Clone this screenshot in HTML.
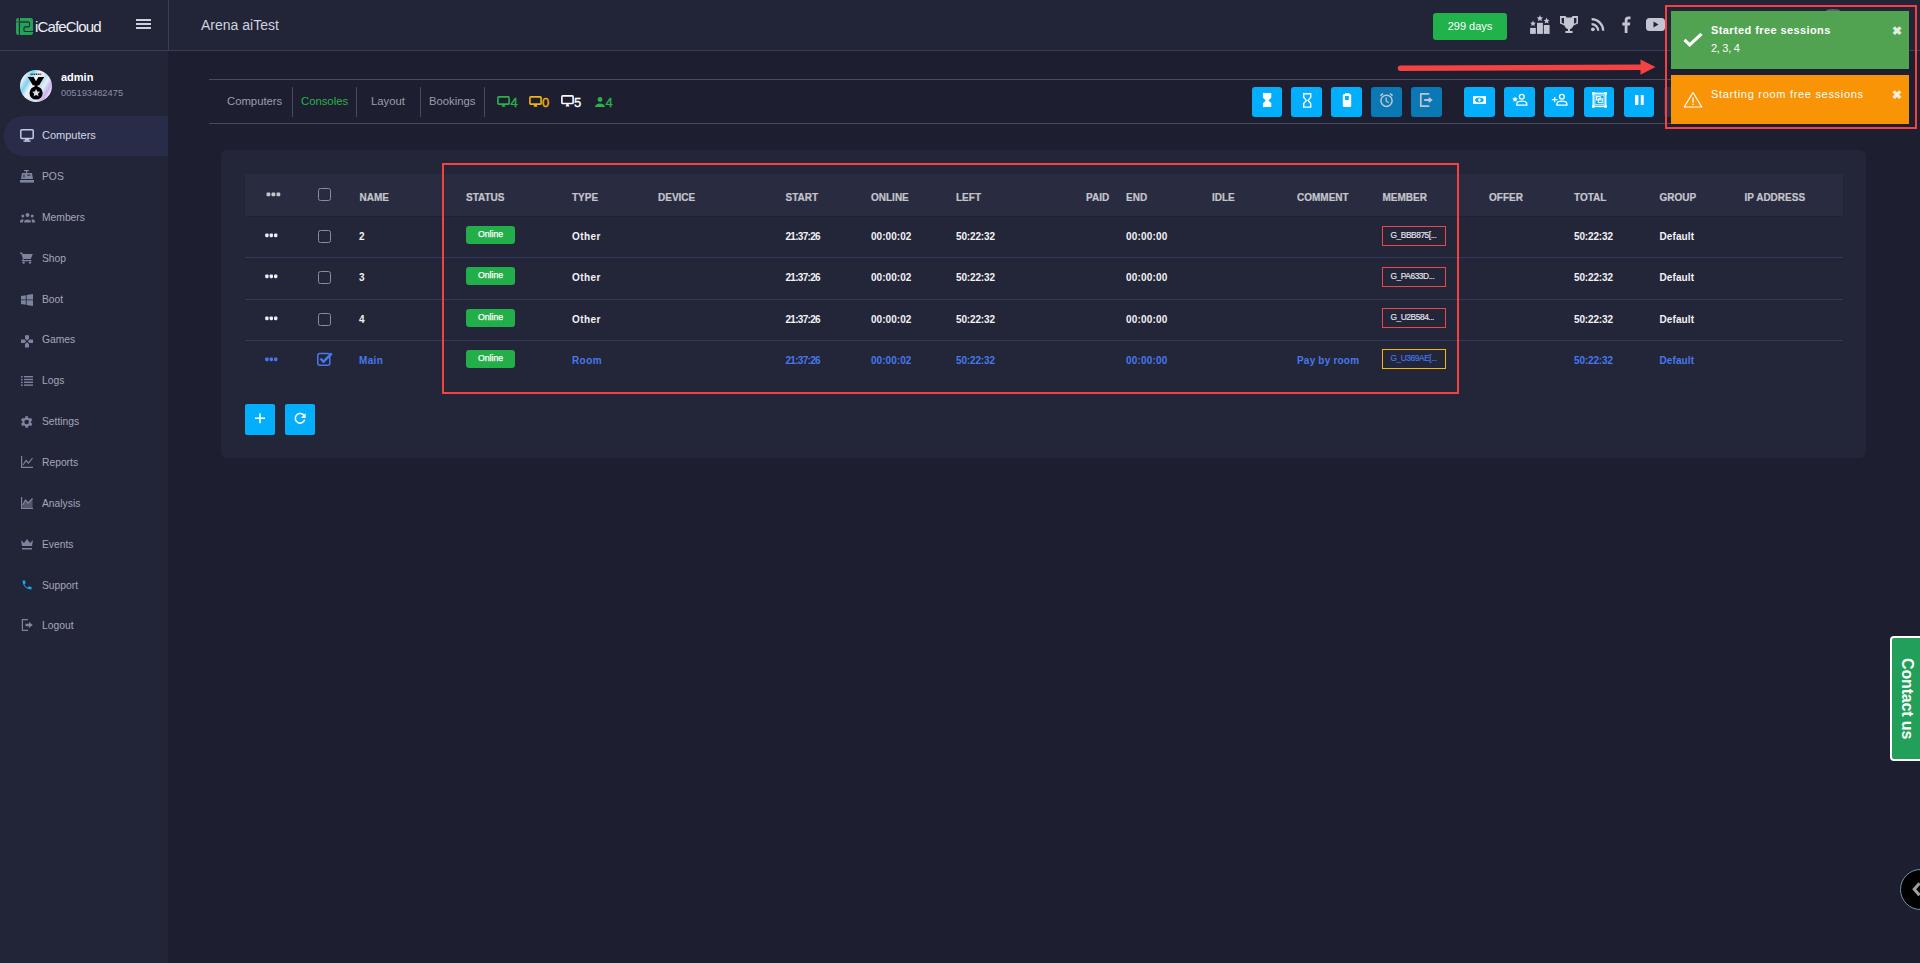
<!DOCTYPE html>
<html><head><meta charset="utf-8"><style>
*{margin:0;padding:0;box-sizing:border-box}
html,body{width:1920px;height:963px;overflow:hidden;background:#1d1e2f;font-family:"Liberation Sans",sans-serif}
.a{position:absolute}
#side{left:0;top:0;width:168px;height:963px;background:#222438}
#hdr{left:0;top:0;width:1920px;height:51px;background:#222438;border-bottom:1px solid #393b57}
#vline{left:168px;top:0;width:1px;height:50px;background:#393b57}
.t{white-space:nowrap;line-height:1}
.mi{left:42px;font-size:10.3px;color:#a3a7ba}
.ic{left:20px;width:14px;height:14px}
.ln{background:#4a4b5f;height:1px}
.dv{background:#4a4b5f;width:1px;top:87px;height:30px}
.tab{font-size:11.3px;color:#9b9dad;top:95.5px}
.btn{top:87px;width:30px;height:30px;border-radius:3px;background:#03aefc}
.btn.dis{background:#0a78b4}
.btn svg{position:absolute;left:0;top:0}
.hd{font-size:10px;font-weight:bold;color:#c4c5cc;top:193px;-webkit-text-stroke:0.2px currentColor}
.cell{font-size:10px;font-weight:bold;color:#f2f2f6;letter-spacing:-0.45px}
.blue{color:#4679ec}
.badge{width:49px;height:18px;background:#22ae48;border-radius:3px;color:#fff;font-size:8.7px;text-align:center;line-height:17px;-webkit-text-stroke:0.25px #fff}
.mem{left:1382px;width:64px;height:20px;border:1.5px solid #e84848;color:#f0f0f4;font-size:8.4px;line-height:16px;padding-left:7.5px;letter-spacing:-0.45px;-webkit-text-stroke:0.15px currentColor}
.sep{left:245px;width:1598px;height:1px;background:#35385a}
.cnt{font-size:13px;top:95.5px;-webkit-text-stroke:0.35px currentColor}
.cb{left:318px;width:13px;height:13px;border:1.3px solid #8a8c99;border-radius:2.5px}
</style></head><body>
<div id="side" class="a"></div>
<div id="hdr" class="a"></div>
<div id="vline" class="a"></div>

<!-- logo -->
<svg class="a" style="left:16px;top:18px" width="17" height="17" viewBox="0 0 17 17">
<rect x="0" y="0" width="17" height="17" rx="2.2" fill="#21a453"/>
<rect x="2.85" y="0" width="1.15" height="17" fill="#23263a"/>
<path d="M0 4H12.6" stroke="#2f5a48" stroke-width="1.1"/>
<path d="M4 4H12.4a1.1 1.1 0 0 1 1.1 1.1V7.7a1.1 1.1 0 0 1-1.1 1.1H9.1a1.1 1.1 0 0 0-1.1 1.1V12.4a1.1 1.1 0 0 0 1.1 1.1H17" fill="none" stroke="#23263a" stroke-width="1.15"/>
</svg>
<div class="a t" style="left:35px;top:19px;font-size:15px;color:#eef0f5;letter-spacing:-0.85px">iCafeCloud</div>
<!-- hamburger -->
<div class="a" style="left:136px;top:19px;width:15px;height:2px;background:#cfd2de"></div>
<div class="a" style="left:136px;top:23px;width:15px;height:2px;background:#cfd2de"></div>
<div class="a" style="left:136px;top:27px;width:15px;height:2px;background:#cfd2de"></div>

<!-- avatar -->
<div class="a" style="left:20px;top:70px;width:32px;height:32px;border-radius:50%;background:linear-gradient(120deg,#b8e8f4 0%,#e8f0f6 15%,#7ed4ee 28%,#eef2f8 40%,#f2e6f0 50%,#b8e4f0 58%,#e8eef6 66%,#c8b0ec 78%,#eef4f8 88%,#7cd8f0 100%)"></div>
<svg class="a" style="left:20px;top:70px" width="32" height="32" viewBox="0 0 32 32">
<path d="M7.8 7h5.8L16 11.2 18.4 7h5.8l-5 8.2h-6.4z" fill="#000"/>
<rect x="14.6" y="14.5" width="3" height="3.5" fill="#000"/>
<circle cx="16.1" cy="23" r="6.6" fill="#000"/>
<path d="M16.1 18.9l1.2 2.5 2.7.35-2 1.9.5 2.7-2.4-1.3-2.4 1.3.5-2.7-2-1.9 2.7-.35z" fill="#dcdce4"/>
<path d="M10.5 4.2h11" stroke="#333" stroke-width="1.4" stroke-dasharray="1.2 0.6"/>
</svg>
<div class="a t" style="left:61px;top:72px;font-size:11px;font-weight:bold;color:#fff">admin</div>
<div class="a t" style="left:61px;top:89px;font-size:9.3px;color:#8b8fa3">005193482475</div>

<!-- active menu -->
<div class="a" style="left:4px;top:116px;width:164px;height:40px;background:#282c48;border-radius:20px 0 0 20px"></div>

<!-- menu icons -->
<svg class="a" style="left:20px;top:129px" width="14" height="13" viewBox="0 0 14 13"><rect x="0.8" y="0.8" width="12.4" height="8.6" rx="1" fill="none" stroke="#c6cbe0" stroke-width="1.5"/><rect x="5" y="10" width="4" height="1.6" fill="#c6cbe0"/><rect x="3.5" y="11.4" width="7" height="1.4" fill="#c6cbe0"/></svg>
<div class="a t mi" style="top:130px;color:#d3d6e6;font-size:11px">Computers</div>

<svg class="a" style="left:20px;top:170px" width="14" height="13" viewBox="0 0 14 13"><rect x="4" y="0" width="5" height="1.2" fill="#7d849d"/><rect x="6" y="1" width="1.2" height="2" fill="#7d849d"/><path d="M2 3h10l1 6H1z" fill="#7d849d"/><rect x="0" y="10" width="14" height="2.6" fill="#7d849d"/><rect x="3.5" y="4.5" width="1" height="3" fill="#222438"/><rect x="7" y="4.6" width="3.5" height="1" fill="#222438"/></svg>
<div class="a t mi" style="top:172px">POS</div>

<svg class="a" style="left:20px;top:213px" width="15" height="10" viewBox="0 0 15 10"><circle cx="7.5" cy="2" r="2" fill="#7d849d"/><circle cx="2.8" cy="3" r="1.5" fill="#7d849d"/><circle cx="12.2" cy="3" r="1.5" fill="#7d849d"/><path d="M4 9.5a3.5 3 0 0 1 7 0z" fill="#7d849d"/><path d="M0 9.5a2.5 2.8 0 0 1 3.5-3l-.5 3z M15 9.5a2.5 2.8 0 0 0-3.5-3l.5 3z" fill="#7d849d"/></svg>
<div class="a t mi" style="top:213px">Members</div>

<svg class="a" style="left:20px;top:252px" width="13" height="12" viewBox="0 0 13 12"><path d="M0 0.5h2.2l.6 1.5h10l-2 5H3.8l-.4 1h8v1.3H1.5l1.4-2.6L1.3 1.8H0z" fill="#7d849d"/><circle cx="3.6" cy="10.6" r="1.2" fill="#7d849d"/><circle cx="10" cy="10.6" r="1.2" fill="#7d849d"/></svg>
<div class="a t mi" style="top:254px">Shop</div>

<svg class="a" style="left:21px;top:294px" width="12" height="12" viewBox="0 0 12 12"><path d="M0 2l4.8-.8v4.3H0z M5.6 1.1L12 0v5.5H5.6z M0 6.3h4.8v4.4L0 10z M5.6 6.3H12V12l-6.4-1z" fill="#7d849d"/></svg>
<div class="a t mi" style="top:295px">Boot</div>

<svg class="a" style="left:21px;top:334.5px" width="12" height="13" viewBox="0 0 12 13"><g fill="#7d849d"><path d="M4 0.3H8V3.8L6 5.4L4 3.8Z"/><path d="M4 12.4H8V8.9L6 7.3L4 8.9Z"/><path d="M0 4.5V8H3.6L5.2 6.25L3.6 4.5Z"/><path d="M12 4.5V8H8.4L6.8 6.25L8.4 4.5Z"/></g></svg>
<div class="a t mi" style="top:335px">Games</div>

<svg class="a" style="left:21px;top:376px" width="12" height="10" viewBox="0 0 12 10"><g fill="#7d849d"><rect x="0" y="0" width="1.6" height="1.6"/><rect x="3" y="0" width="9" height="1.4"/><rect x="0" y="2.8" width="1.6" height="1.6"/><rect x="3" y="2.8" width="9" height="1.4"/><rect x="0" y="5.6" width="1.6" height="1.6"/><rect x="3" y="5.6" width="9" height="1.4"/><rect x="0" y="8.4" width="1.6" height="1.6"/><rect x="3" y="8.4" width="9" height="1.4"/></g></svg>
<div class="a t mi" style="top:376px">Logs</div>

<svg class="a" style="left:18.3px;top:413.7px" width="16" height="16" viewBox="0 0 24 24"><path fill="#7d849d" d="M19.4 13a7.7 7.7 0 0 0 0-2l2.1-1.6-2-3.5-2.5 1a7.3 7.3 0 0 0-1.7-1L15 3.2h-4l-.4 2.7a7.3 7.3 0 0 0-1.7 1l-2.5-1-2 3.5L6.6 11a7.7 7.7 0 0 0 0 2l-2.1 1.6 2 3.5 2.5-1a7.3 7.3 0 0 0 1.7 1l.4 2.7h4l.4-2.7a7.3 7.3 0 0 0 1.7-1l2.5 1 2-3.5zM13 15.5a3.5 3.5 0 1 1 0-7 3.5 3.5 0 0 1 0 7z"/></svg>
<div class="a t mi" style="top:417px">Settings</div>

<svg class="a" style="left:21px;top:456px" width="12" height="12" viewBox="0 0 12 12"><path d="M0.6 0v11.4H12" fill="none" stroke="#7d849d" stroke-width="1.2"/><path d="M2 9l3-4.5 2.5 2.5L11.5 2" fill="none" stroke="#7d849d" stroke-width="1.2"/></svg>
<div class="a t mi" style="top:458px">Reports</div>

<svg class="a" style="left:21px;top:497px" width="12" height="12" viewBox="0 0 12 12"><path d="M0.6 0v11.4H12" fill="none" stroke="#7d849d" stroke-width="1.2"/><path d="M1.5 10.8V8l3-5 2.5 3 4.5-4.5v9.3z" fill="#7d849d" opacity=".55"/><path d="M1.5 8l3-5 2.5 3 4.5-4.5" fill="none" stroke="#7d849d" stroke-width="1.2"/></svg>
<div class="a t mi" style="top:499px">Analysis</div>

<svg class="a" style="left:21px;top:539px" width="12" height="11" viewBox="0 0 12 11"><path d="M0 1l3 3 3-4 3 4 3-3-1 6H1z" fill="#7d849d"/><rect x="1" y="9" width="10" height="1.5" fill="#7d849d"/></svg>
<div class="a t mi" style="top:540px">Events</div>

<svg class="a" style="left:21px;top:579px" width="12" height="12" viewBox="0 0 24 24"><path fill="#17a8f0" d="M6.6 10.8a15 15 0 0 0 6.6 6.6l2.2-2.2a1 1 0 0 1 1-.25 11.4 11.4 0 0 0 3.6.57 1 1 0 0 1 1 1V20a1 1 0 0 1-1 1A17 17 0 0 1 3 4a1 1 0 0 1 1-1h3.5a1 1 0 0 1 1 1c0 1.25.2 2.45.57 3.57a1 1 0 0 1-.25 1z"/></svg>
<div class="a t mi" style="top:581px">Support</div>

<svg class="a" style="left:21px;top:619px" width="12" height="12" viewBox="0 0 12 12"><path d="M7 0.6H1.4v10.8H7" fill="none" stroke="#7d849d" stroke-width="1.2"/><path d="M4.5 4.8H8V3l3.8 3L8 9V7.2H4.5z" fill="#7d849d"/></svg>
<div class="a t mi" style="top:621px">Logout</div>

<!-- header content -->
<div class="a t" style="left:201px;top:18px;font-size:14px;color:#d0d2de">Arena aiTest</div>
<div class="a" style="left:1433px;top:13px;width:74px;height:27px;background:#21b24b;border-radius:3px;color:#fff;font-size:11px;line-height:27px;text-align:center">299 days</div>


<!-- header icons -->
<svg class="a" style="left:1529px;top:15px" width="22" height="20" viewBox="0 0 22 20"><g fill="#c3c6d2"><rect x="1.1" y="12.9" width="5.7" height="6"/><rect x="8" y="7.8" width="5.9" height="11.1"/><rect x="14.8" y="10" width="5.8" height="8.9"/><path d="M4.00,5.50 L4.82,7.47 L6.95,7.64 L5.33,9.03 L5.82,11.11 L4.00,9.99 L2.18,11.11 L2.67,9.03 L1.05,7.64 L3.18,7.47Z"/><path d="M10.90,0.10 L11.80,2.26 L14.13,2.45 L12.36,3.97 L12.90,6.25 L10.90,5.03 L8.90,6.25 L9.44,3.97 L7.67,2.45 L10.00,2.26Z"/><path d="M17.60,2.60 L18.47,4.70 L20.74,4.88 L19.01,6.36 L19.54,8.57 L17.60,7.38 L15.66,8.57 L16.19,6.36 L14.46,4.88 L16.73,4.70Z"/></g></svg>
<svg class="a" style="left:1559px;top:15px" width="20" height="19" viewBox="0 0 20 19"><path fill-rule="evenodd" fill="#c3c6d2" d="M1 1H6.5L7.5 2.6H12.5L13.5 1H19V8.6L14.6 10.6C13.6 13 12.2 14 11 14.3V16H13.6V18H6.4V16H9V14.3C7.8 14 6.4 13 5.4 10.6L1 8.6Z M2.6 3V7.7L5 8.7V3Z M17.4 3V7.7L15 8.7V3Z"/></svg>
<svg class="a" style="left:1590px;top:17px" width="16" height="16" viewBox="0 0 16 16"><g fill="none" stroke="#c3c6d2" stroke-width="2.2"><path d="M1.6 7.2A6.6 6.6 0 0 1 8.2 13.8"/><path d="M1.6 2.2A11.6 11.6 0 0 1 13.2 13.8"/></g><circle cx="2.9" cy="12.3" r="1.9" fill="#c3c6d2"/></svg>
<svg class="a" style="left:1621px;top:16px" width="10" height="17" viewBox="0 0 10 17"><path d="M6.5 17V9.5h2.4l.4-3H6.5V4.7c0-.85.3-1.45 1.5-1.45H9.5V.5A19 19 0 0 0 7.3.4C5.2.4 3.7 1.7 3.7 4.1v2.4H1.3v3h2.4V17z" fill="#c3c6d2"/></svg>
<svg class="a" style="left:1646px;top:18px" width="19" height="13" viewBox="0 0 19 13"><rect x="0" y="0" width="19" height="13" rx="3.5" fill="#c3c6d2"/><path d="M7.5 3.5v6l5-3z" fill="#222438"/></svg>

<!-- tabs -->
<div class="a ln" style="left:209px;top:79px;width:1660px"></div>
<div class="a ln" style="left:209px;top:123px;width:1660px"></div>
<div class="a t tab" style="left:227px">Computers</div>
<div class="a dv" style="left:292px"></div>
<div class="a t tab" style="left:301px;color:#2bb24c">Consoles</div>
<div class="a dv" style="left:356px"></div>
<div class="a t tab" style="left:371px">Layout</div>
<div class="a dv" style="left:420px"></div>
<div class="a t tab" style="left:429px">Bookings</div>
<div class="a dv" style="left:484px"></div>
<!-- counters -->
<svg class="a" style="left:497px;top:96px" width="13" height="11" viewBox="0 0 13 11"><rect x="0.9" y="0.9" width="11.2" height="7.2" rx="0.8" fill="none" stroke="#2bb24c" stroke-width="1.6"/><path d="M4.5 10.8l1.2-2.6h1.6l1.2 2.6z" fill="#2bb24c"/></svg>
<div class="a t cnt" style="left:510.5px;color:#2bb24c">4</div>
<svg class="a" style="left:529px;top:96px" width="13" height="11" viewBox="0 0 13 11"><rect x="0.9" y="0.9" width="11.2" height="7.2" rx="0.8" fill="none" stroke="#f5b50c" stroke-width="1.6"/><path d="M4.5 10.8l1.2-2.6h1.6l1.2 2.6z" fill="#f5b50c"/></svg>
<div class="a t cnt" style="left:542px;color:#f5b50c">0</div>
<svg class="a" style="left:561px;top:95px" width="13" height="12" viewBox="0 0 13 12"><rect x="0.9" y="0.9" width="11.2" height="7.6" rx="0.8" fill="none" stroke="#ffffff" stroke-width="1.6"/><path d="M4.5 11.5l1.2-2.6h1.6l1.2 2.6z" fill="#ffffff"/></svg>
<div class="a t cnt" style="left:574px;color:#fff">5</div>
<svg class="a" style="left:595px;top:97px" width="10" height="10" viewBox="0 0 10 10"><circle cx="5" cy="2.5" r="2.4" fill="#2bb24c"/><path d="M0 10a5 3.6 0 0 1 10 0z" fill="#2bb24c"/></svg>
<div class="a t cnt" style="left:605.5px;color:#2bb24c">4</div>

<!-- toolbar buttons -->
<div class="a btn" style="left:1252px"><svg width="30" height="30" viewBox="0 0 30 30"><path d="M10.9 6.1h8.4v4.4l-2.8 2.9 2.8 2.9v3.6h-8.4v-3.6l2.8-2.9-2.8-2.9z" fill="#fff"/></svg></div>
<div class="a btn" style="left:1291px;width:31px"><svg width="31" height="30" viewBox="0 0 31 30"><path d="M12.7 6.8h7v3.4l-2.6 3.2 2.6 3.2v3.5h-7v-3.5l2.6-3.2-2.6-3.2z" fill="none" stroke="#fff" stroke-width="1.4"/></svg></div>
<div class="a btn" style="left:1331px;width:31px"><svg width="31" height="30" viewBox="0 0 31 30"><rect x="14" y="6.1" width="4.4" height="2" fill="#fff"/><rect x="11.8" y="7.3" width="8.4" height="12.6" rx="0.8" fill="#fff"/><rect x="13.9" y="9" width="3.9" height="4" fill="#03aefc"/></svg></div>
<div class="a btn dis" style="left:1371px;width:31px"><svg width="31" height="30" viewBox="0 0 31 30"><circle cx="15.5" cy="13.8" r="5.6" fill="none" stroke="#c2c6cb" stroke-width="1.5"/><path d="M15.2 10.4v3.6l2.6 1.7" fill="none" stroke="#c2c6cb" stroke-width="1.3"/><path d="M9.4 8.6l2.6-2.1M21.6 8.6l-2.6-2.1" stroke="#c2c6cb" stroke-width="1.6"/></svg></div>
<div class="a btn dis" style="left:1411px;width:31px"><svg width="31" height="30" viewBox="0 0 31 30"><path d="M17.6 7.4v-0.6h-7.8v12.4h7.8v-0.6" fill="none" stroke="#c2c6cb" stroke-width="1.7" stroke-linejoin="round"/><path d="M13.2 12h4.5V9.9L21.8 13l-4.1 3.1v-2.1h-4.5z" fill="#c2c6cb"/></svg></div>
<div class="a btn" style="left:1464px;width:31px"><svg width="31" height="30" viewBox="0 0 31 30"><rect x="9" y="9.1" width="13" height="7.8" fill="#fff"/><ellipse cx="15.4" cy="13" rx="4.3" ry="2.5" fill="#03aefc"/><ellipse cx="15.4" cy="13" rx="1.3" ry="1.7" fill="#fff"/></svg></div>
<div class="a btn" style="left:1504px;width:31px"><svg width="31" height="30" viewBox="0 0 31 30"><circle cx="17.8" cy="9.7" r="2.4" fill="none" stroke="#fff" stroke-width="1.3"/><path d="M12.8 18.1v-1.2c0-1.8 2.4-2.7 5-2.7s5 .9 5 2.7v1.2z" fill="none" stroke="#fff" stroke-width="1.3"/><path d="M11 9.6l.85 1.75 1.9.25-1.4 1.3.35 1.9-1.7-.9-1.7.9.35-1.9-1.4-1.3 1.9-.25z" fill="#fff"/></svg></div>
<div class="a btn" style="left:1544px"><svg width="30" height="30" viewBox="0 0 30 30"><circle cx="17.9" cy="9.7" r="2.4" fill="none" stroke="#fff" stroke-width="1.3"/><path d="M12.9 18.1v-1.2c0-1.8 2.4-2.7 5-2.7s5 .9 5 2.7v1.2z" fill="none" stroke="#fff" stroke-width="1.3"/><path d="M7.8 12.6h5.7M10.65 9.9v5.4" stroke="#fff" stroke-width="1.3"/></svg></div>
<div class="a btn" style="left:1584px"><svg width="30" height="30" viewBox="0 0 30 30"><rect x="9.2" y="6.3" width="12.6" height="13.2" fill="none" stroke="#fff" stroke-width="1.3"/><g fill="#fff"><rect x="8.1" y="5.1" width="2.6" height="2.6"/><rect x="20.3" y="5.1" width="2.6" height="2.6"/><rect x="8.1" y="18.1" width="2.6" height="2.6"/><rect x="20.3" y="18.1" width="2.6" height="2.6"/></g><rect x="10.9" y="8" width="9.2" height="9.8" fill="none" stroke="#fff" stroke-width="0.9"/><rect x="12.6" y="9.6" width="3.6" height="3.4" fill="none" stroke="#fff" stroke-width="1.1"/><rect x="14.4" y="11.8" width="3.8" height="3.8" fill="none" stroke="#fff" stroke-width="1.1"/></svg></div>
<div class="a btn" style="left:1624px"><svg width="30" height="30" viewBox="0 0 30 30"><rect x="11" y="8" width="3.4" height="10" fill="#fff"/><rect x="16.8" y="8" width="2.9" height="10" fill="#fff"/></svg></div>
<div class="a" style="left:1664px;top:87px;width:30px;height:30px;background:#2b2e49;border-radius:3px"></div>

<!-- card -->
<div class="a" style="left:221px;top:150px;width:1645px;height:308px;background:#232538;border-radius:6px"></div>
<div class="a" style="left:245px;top:174px;width:1598px;height:42px;background:#292b40"></div>
<div class="a" style="left:245px;top:216px;width:1598px;height:1px;background:#1f2033"></div>
<div class="a sep" style="top:257px"></div>
<div class="a sep" style="top:299px"></div>
<div class="a sep" style="top:340px"></div>
<!-- header row -->
<svg class="a" style="left:266px;top:192px" width="15" height="5" viewBox="0 0 15 5"><g fill="#c3c4cc"><rect x="0.5" y="0.5" width="3.8" height="3.8" rx="1"/><rect x="5.5" y="0.5" width="3.8" height="3.8" rx="1"/><rect x="10.5" y="0.5" width="3.8" height="3.8" rx="1"/></g></svg>
<div class="a cb" style="top:188px"></div>

<div class="a t hd" style="left:359.5px">NAME</div>
<div class="a t hd" style="left:466px">STATUS</div>
<div class="a t hd" style="left:572px">TYPE</div>
<div class="a t hd" style="left:658px">DEVICE</div>
<div class="a t hd" style="left:785.5px">START</div>
<div class="a t hd" style="left:871px">ONLINE</div>
<div class="a t hd" style="left:956px">LEFT</div>
<div class="a t hd" style="left:1086px">PAID</div>
<div class="a t hd" style="left:1126px">END</div>
<div class="a t hd" style="left:1212px">IDLE</div>
<div class="a t hd" style="left:1297px">COMMENT</div>
<div class="a t hd" style="left:1382.5px">MEMBER</div>
<div class="a t hd" style="left:1489px">OFFER</div>
<div class="a t hd" style="left:1574px">TOTAL</div>
<div class="a t hd" style="left:1659.5px">GROUP</div>
<div class="a t hd" style="left:1744.5px">IP ADDRESS</div>
<svg class="a" style="left:265px;top:233.0px" width="14" height="5" viewBox="0 0 14 5"><g fill="#eef0f8"><rect x="0.2" y="0.4" width="3.4" height="3.8" rx="1.1"/><rect x="4.6" y="0.4" width="3.4" height="3.8" rx="1.1"/><rect x="9" y="0.4" width="3.4" height="3.8" rx="1.1"/></g></svg>
<div class="a cb" style="top:230.0px"></div>
<div class="a t cell" style="left:359px;top:232.0px;letter-spacing:0">2</div>
<div class="a badge" style="left:466px;top:226.0px">Online</div>
<div class="a t cell" style="left:572px;top:232.0px;letter-spacing:0.4px">Other</div>
<div class="a t cell" style="left:785.5px;top:232.0px;letter-spacing:-0.7px">21:37:26</div>
<div class="a t cell" style="left:871px;top:232.0px;letter-spacing:0.05px">00:00:02</div>
<div class="a t cell" style="left:956px;top:232.0px;letter-spacing:-0.15px">50:22:32</div>
<div class="a t cell" style="left:1126px;top:232.0px;letter-spacing:0.2px">00:00:00</div>
<div class="a t cell" style="left:1574px;top:232.0px;letter-spacing:-0.15px">50:22:32</div>
<div class="a t cell" style="left:1659.5px;top:232.0px;letter-spacing:0.1px">Default</div>
<div class="a mem" style="top:225.5px;border-color:#e84848;color:#e8e8ee">G_BBB875[...</div>
<svg class="a" style="left:265px;top:274.0px" width="14" height="5" viewBox="0 0 14 5"><g fill="#eef0f8"><rect x="0.2" y="0.4" width="3.4" height="3.8" rx="1.1"/><rect x="4.6" y="0.4" width="3.4" height="3.8" rx="1.1"/><rect x="9" y="0.4" width="3.4" height="3.8" rx="1.1"/></g></svg>
<div class="a cb" style="top:271.0px"></div>
<div class="a t cell" style="left:359px;top:273.0px;letter-spacing:0">3</div>
<div class="a badge" style="left:466px;top:267.0px">Online</div>
<div class="a t cell" style="left:572px;top:273.0px;letter-spacing:0.4px">Other</div>
<div class="a t cell" style="left:785.5px;top:273.0px;letter-spacing:-0.7px">21:37:26</div>
<div class="a t cell" style="left:871px;top:273.0px;letter-spacing:0.05px">00:00:02</div>
<div class="a t cell" style="left:956px;top:273.0px;letter-spacing:-0.15px">50:22:32</div>
<div class="a t cell" style="left:1126px;top:273.0px;letter-spacing:0.2px">00:00:00</div>
<div class="a t cell" style="left:1574px;top:273.0px;letter-spacing:-0.15px">50:22:32</div>
<div class="a t cell" style="left:1659.5px;top:273.0px;letter-spacing:0.1px">Default</div>
<div class="a mem" style="top:266.5px;border-color:#e84848;color:#e8e8ee">G_PA633D...</div>
<svg class="a" style="left:265px;top:315.5px" width="14" height="5" viewBox="0 0 14 5"><g fill="#eef0f8"><rect x="0.2" y="0.4" width="3.4" height="3.8" rx="1.1"/><rect x="4.6" y="0.4" width="3.4" height="3.8" rx="1.1"/><rect x="9" y="0.4" width="3.4" height="3.8" rx="1.1"/></g></svg>
<div class="a cb" style="top:312.5px"></div>
<div class="a t cell" style="left:359px;top:314.5px;letter-spacing:0">4</div>
<div class="a badge" style="left:466px;top:308.5px">Online</div>
<div class="a t cell" style="left:572px;top:314.5px;letter-spacing:0.4px">Other</div>
<div class="a t cell" style="left:785.5px;top:314.5px;letter-spacing:-0.7px">21:37:26</div>
<div class="a t cell" style="left:871px;top:314.5px;letter-spacing:0.05px">00:00:02</div>
<div class="a t cell" style="left:956px;top:314.5px;letter-spacing:-0.15px">50:22:32</div>
<div class="a t cell" style="left:1126px;top:314.5px;letter-spacing:0.2px">00:00:00</div>
<div class="a t cell" style="left:1574px;top:314.5px;letter-spacing:-0.15px">50:22:32</div>
<div class="a t cell" style="left:1659.5px;top:314.5px;letter-spacing:0.1px">Default</div>
<div class="a mem" style="top:308px;border-color:#e84848;color:#e8e8ee">G_U2B584...</div>
<svg class="a" style="left:265px;top:356.5px" width="14" height="5" viewBox="0 0 14 5"><g fill="#4679ec"><rect x="0.2" y="0.4" width="3.4" height="3.8" rx="1.1"/><rect x="4.6" y="0.4" width="3.4" height="3.8" rx="1.1"/><rect x="9" y="0.4" width="3.4" height="3.8" rx="1.1"/></g></svg>
<svg class="a" style="left:317px;top:351.5px" width="16" height="14" viewBox="0 0 16 14"><rect x="0.8" y="1.6" width="12" height="11.6" rx="2" fill="none" stroke="#4679ec" stroke-width="1.5"/><path d="M3.5 6.5l3 3.2L14.8 1.3" fill="none" stroke="#4679ec" stroke-width="2.4"/></svg>
<div class="a t cell blue" style="left:359px;top:355.5px;letter-spacing:0.35px">Main</div>
<div class="a badge" style="left:466px;top:349.5px">Online</div>
<div class="a t cell blue" style="left:572px;top:355.5px;letter-spacing:0.4px">Room</div>
<div class="a t cell blue" style="left:785.5px;top:355.5px;letter-spacing:-0.7px">21:37:26</div>
<div class="a t cell blue" style="left:871px;top:355.5px;letter-spacing:0.05px">00:00:02</div>
<div class="a t cell blue" style="left:956px;top:355.5px;letter-spacing:-0.15px">50:22:32</div>
<div class="a t cell blue" style="left:1126px;top:355.5px;letter-spacing:0.2px">00:00:00</div>
<div class="a t cell blue" style="left:1574px;top:355.5px;letter-spacing:-0.15px">50:22:32</div>
<div class="a t cell blue" style="left:1297px;top:355.5px;letter-spacing:0.2px">Pay by room</div>
<div class="a t cell blue" style="left:1659.5px;top:355.5px;letter-spacing:0.1px">Default</div>
<div class="a mem" style="top:349px;border-color:#f5b50c;color:#4679ec">G_U369AE[...</div>

<!-- add / refresh -->
<div class="a" style="left:245px;top:404px;width:30px;height:31px;background:#03aefc;border-radius:2px"><svg width="30" height="31" viewBox="0 0 30 31"><path d="M15 9.2v10M10 14.2h10" stroke="#fff" stroke-width="1.5"/></svg></div>
<div class="a" style="left:285px;top:404px;width:30px;height:31px;background:#03aefc;border-radius:2px"><svg width="30" height="31" viewBox="0 0 30 31"><path d="M19.4 12.2a4.8 4.8 0 1 0 .3 3.4" fill="none" stroke="#fff" stroke-width="1.6"/><path d="M20.6 9.2v4.8h-4.8z" fill="#fff"/></svg></div>

<!-- red annotation rect -->
<div class="a" style="left:442px;top:163px;width:1017px;height:231px;border:2px solid #f44242"></div>
<!-- arrow -->
<svg class="a" style="left:1390px;top:55px" width="275" height="25" viewBox="0 0 275 25"><path d="M10.5 13.2L251 12.2" stroke="#f44242" stroke-width="5.5" stroke-linecap="round"/><path d="M250.5 4.5L265.5 12L250.5 19.8z" fill="#f44242"/></svg>

<!-- toasts -->
<div class="a" style="left:1665px;top:5px;width:252px;height:124px;border:2px solid #f44242"></div>
<div class="a" style="left:1826px;top:8.5px;width:14px;height:3px;border-radius:50%;background:#7a7c90;opacity:.7"></div>
<div class="a" style="left:1671px;top:11px;width:238px;height:58px;background:#51a351"></div>
<svg class="a" style="left:1683px;top:32px" width="20" height="15" viewBox="0 0 20 15"><path d="M1.5 7.8l5.2 5L18.5 1.8" fill="none" stroke="#fff" stroke-width="3.2"/></svg>
<div class="a t" style="left:1711px;top:25px;font-size:11px;font-weight:bold;color:#fff;letter-spacing:0.4px">Started free sessions</div>
<div class="a t" style="left:1711px;top:43px;font-size:11px;color:#fff;letter-spacing:-0.3px">2, 3, 4</div>
<div class="a t" style="left:1892px;top:25px;font-size:12px;font-weight:bold;color:#e0eee0">&#10006;</div>
<div class="a" style="left:1671px;top:75px;width:238px;height:49px;background:#f89406"></div>
<svg class="a" style="left:1683px;top:91px" width="20" height="17" viewBox="0 0 20 17"><path d="M10 1.5L18.8 16H1.2z" fill="none" stroke="#fff" stroke-width="1.2" stroke-linejoin="round"/><path d="M10 6.5v5" stroke="#fff" stroke-width="1.4"/><circle cx="10" cy="13.3" r="0.8" fill="#fff"/></svg>
<div class="a t" style="left:1711px;top:89px;font-size:11px;color:#fff;letter-spacing:0.7px">Starting room free sessions</div>
<div class="a t" style="left:1892px;top:89px;font-size:12px;font-weight:bold;color:#fbeedd">&#10006;</div>

<!-- contact us -->
<div class="a" style="left:1890px;top:636px;width:40px;height:125px;background:#22a05a;border:2px solid #fff;border-radius:4px"></div>
<div class="a t" style="left:1899px;top:658px;width:16px;height:82px;writing-mode:vertical-rl;font-size:16px;font-weight:bold;letter-spacing:-0.15px;color:#fff;line-height:16px">Contact us</div>

<!-- bottom circle -->
<div class="a" style="left:1900px;top:868.5px;width:41px;height:41px;border-radius:50%;background:#000;border:1px solid #6a9aaa"></div>
<svg class="a" style="left:1911px;top:881px" width="9" height="16" viewBox="0 0 9 16"><path d="M8.5 2.2L3.2 8.2l5.3 6" fill="none" stroke="#a0a0a0" stroke-width="3"/></svg>
</body></html>
